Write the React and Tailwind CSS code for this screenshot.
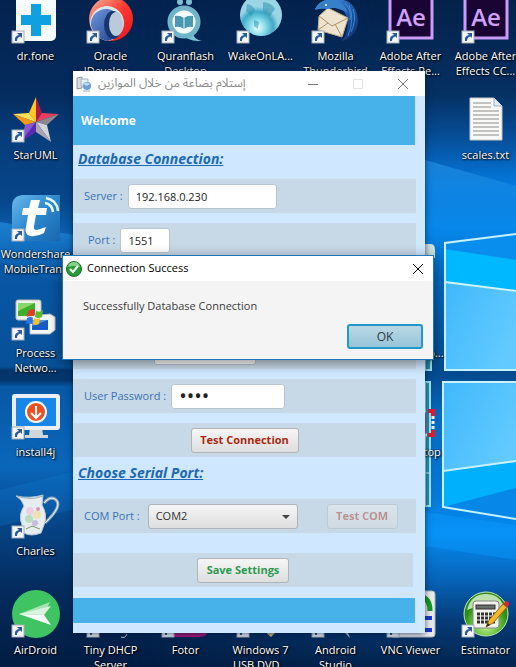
import React from "react";

const FONT = "font-['Open_Sans','Noto_Sans',sans-serif]";

function Wallpaper() {
  return (
    <svg className="absolute inset-0 h-full w-full" viewBox="0 0 516 667" preserveAspectRatio="none" aria-hidden="true">
      <defs>
        <linearGradient id="left" x1="0" y1="0" x2="0" y2="1">
          <stop offset="0" stopColor="#04224f" />
          <stop offset="0.14" stopColor="#042c5e" />
          <stop offset="0.2" stopColor="#063c7a" />
          <stop offset="0.3" stopColor="#06468a" />
          <stop offset="0.35" stopColor="#0b5fae" />
          <stop offset="0.42" stopColor="#0856a4" />
          <stop offset="0.55" stopColor="#075098" />
          <stop offset="0.555" stopColor="#04366c" />
          <stop offset="0.57" stopColor="#04366c" />
          <stop offset="0.58" stopColor="#0858a6" />
          <stop offset="0.7" stopColor="#0a66ba" />
          <stop offset="0.78" stopColor="#06468a" />
          <stop offset="0.88" stopColor="#042c5e" />
          <stop offset="1" stopColor="#021c42" />
        </linearGradient>
        <linearGradient id="right" x1="0" y1="0" x2="0" y2="1">
          <stop offset="0" stopColor="#04214a" />
          <stop offset="0.14" stopColor="#053062" />
          <stop offset="0.21" stopColor="#06509c" />
          <stop offset="0.28" stopColor="#047be0" />
          <stop offset="0.34" stopColor="#0489ee" />
          <stop offset="0.42" stopColor="#0568be" />
          <stop offset="0.56" stopColor="#044a8e" />
          <stop offset="0.62" stopColor="#0568be" />
          <stop offset="0.74" stopColor="#0578d6" />
          <stop offset="0.8" stopColor="#068cf2" />
          <stop offset="0.87" stopColor="#0763b8" />
          <stop offset="0.93" stopColor="#053c78" />
          <stop offset="1" stopColor="#03244e" />
        </linearGradient>
        <linearGradient id="fade" x1="0" y1="0" x2="1" y2="0">
          <stop offset="0.25" stopColor="#fff" stopOpacity="0" />
          <stop offset="0.85" stopColor="#fff" />
        </linearGradient>
        <mask id="rightMask"><rect width="516" height="667" fill="url(#fade)" /></mask>
        <linearGradient id="pane" x1="0" y1="0" x2="1" y2="0.6">
          <stop offset="0" stopColor="#40b8fb" />
          <stop offset="1" stopColor="#62caff" />
        </linearGradient>
        <linearGradient id="ray" x1="0" y1="0" x2="0" y2="1">
          <stop offset="0" stopColor="#2a9cf0" stopOpacity="0.55" />
          <stop offset="1" stopColor="#1178cc" stopOpacity="0" />
        </linearGradient>
      </defs>
      <rect width="516" height="667" fill="url(#left)" />
      <rect width="516" height="667" fill="url(#right)" mask="url(#rightMask)" />
      <path d="M0 222 L80 236 L80 290 L0 262Z" fill="url(#ray)" />
      <path d="M0 526 L80 508 L80 470 L0 490Z" fill="#1180d8" opacity="0.25" />
      <path d="M425 160 L516 186 V236 L445 243 V255 H425Z" fill="url(#ray)" />
      <path d="M425 546 L516 560 L516 525 L425 512Z" fill="#0a9bff" opacity="0.4" />
      <path d="M445 244 L516 234 V370 H445Z" fill="#00b8ff" />
      <path d="M445 244 L516 234 V260 L445 249Z" fill="#0a8eee" />
      <path d="M445 282 L516 292 V370 H445Z" fill="url(#pane)" />
      <path d="M445 282 L516 291" stroke="#d0f4ff" strokeWidth="2" />
      <path d="M516 234 L445 243 V370 H516" fill="none" stroke="#c4f2ff" strokeWidth="2" />
      <path d="M443 382 H516 V519 L443 508Z" fill="#00b0fc" />
      <path d="M443 382 H516 V462 L443 471Z" fill="url(#pane)" />
      <path d="M443 507 L516 488 V519Z" fill="#0787e8" />
      <path d="M443 471 L516 461" stroke="#c4f2ff" strokeWidth="2" />
      <path d="M516 382 H443 V507 L516 519" fill="none" stroke="#c4f2ff" strokeWidth="2" />
      <path d="M425 252 H431 V370 H425Z M425 382 H430 V506 H425Z" fill="#2690a8" stroke="#9be4f0" strokeWidth="2" />
      <path d="M425 473 H430" stroke="#c4f2ff" />
    </svg>
  );
}

const art = {
  drfone: (
    <>
      <rect x="4" y="0" width="40" height="45" rx="5" fill="#f8fbfd" />
      <path d="M19 8h10v11h10v10H29v11H19V29H9V19h10z" fill="#0fa0e2" />
    </>
  ),
  oracle: (
    <>
      <defs>
        <linearGradient id="orR" x1="0" y1="0" x2="1" y2="1"><stop offset="0" stopColor="#f8b8a0" /><stop offset=".5" stopColor="#fb3a30" /><stop offset="1" stopColor="#e8141c" /></linearGradient>
        <linearGradient id="orB" x1="0" y1="0" x2="1" y2="1"><stop offset="0" stopColor="#6c9ae0" /><stop offset="1" stopColor="#1c3c88" /></linearGradient>
      </defs>
      <circle cx="24" cy="23" r="22" fill="url(#orR)" />
      <path d="M3 28A17 17 0 1 1 33 38Q28 44 20 45Q6 42 3 28Z" fill="#dfe4ea" />
      <path d="M4 30A15 15 0 1 1 33 33Q30 43 20 45Q7 42 4 30Z" fill="url(#orB)" />
      <ellipse cx="26" cy="29" rx="9" ry="14" fill="#173670" />
      <ellipse cx="29" cy="28" rx="7" ry="12" fill="#bcc9da" />
    </>
  ),
  quran: (
    <>
      <circle cx="18" cy="6" r="3" fill="#7cc0d2" /><circle cx="27" cy="6" r="3" fill="#7cc0d2" />
      <path d="M22 40c6 5 12 5 18 5-5-1-8-3-9-8z" fill="#7cc0d2" />
      <circle cx="22" cy="26" r="14" fill="#f2fafc" stroke="#6fb5c9" strokeWidth="5" />
      <path d="M13 20q5-1 9 2 4-3 9-2v11q-5-1-9 2-4-3-9-2z" fill="#4b98b2" /><path d="M22 22v11" stroke="#e4f4f8" />
    </>
  ),
  globe: (
    <>
      <defs><radialGradient id="gl" cx=".42" cy=".8"><stop offset="0" stopColor="#f2ffff" /><stop offset=".35" stopColor="#8fe0ec" /><stop offset=".75" stopColor="#3fa9c8" /><stop offset="1" stopColor="#9bd4e4" /></radialGradient></defs>
      <circle cx="24" cy="19" r="21" fill="url(#gl)" />
      <path d="M10 8q6 1 8 6l-4 6-5-5zM26 6q9 1 12 7l-5 7-7-4zM17 24l5 2-1 7-4-3z" fill="#258cab" opacity=".5" />
    </>
  ),
  bird: (
    <>
      <defs><linearGradient id="tb" x1="0" y1="0" x2="1" y2="1"><stop offset="0" stopColor="#5ba8e6" /><stop offset=".5" stopColor="#1e5cad" /><stop offset="1" stopColor="#0c2c6b" /></linearGradient></defs>
      <path d="M3 13Q9 2 24 3Q44 3 46 24Q46 40 30 45Q40 32 32 15L16 9Z" fill="url(#tb)" />
      <path d="M7 20L16 12L36 22L30 41L6 34Z" fill="#eee3cd" stroke="#bfae8d" />
      <path d="M7 20L20 30L36 22M6 34L16 27M30 41L23 28" fill="none" stroke="#a99270" />
      <path d="M3 14Q8 2 20 4Q32 5 36 17Q24 10 16 13Q9 12 3 14Z" fill="#387fc9" />
      <circle cx="14" cy="9" r="1" fill="#fff" />
      <path d="M37 9Q43 22 36 40M41 13Q45 24 39 36M33 7Q40 15 38 24" fill="none" stroke="#4a94de" opacity=".8" />
    </>
  ),
  ae: (
    <>
      <rect x="3" y="1" width="42" height="41" fill="#1a0433" stroke="#c99cf5" strokeWidth="3" />
      <text x="24" y="30" textAnchor="middle" fontSize="24" fontWeight="600" fill="#cfa2fa">Ae</text>
    </>
  ),
  star: (
    <>
      <path d="M24 2L17 18L24 27Z" fill="#ffc81f" /><path d="M24 2L30 18L24 27Z" fill="#b4184a" />
      <path d="M30 18L47 19L24 27Z" fill="#e8405c" /><path d="M47 19L35 30L24 27Z" fill="#8a8a8e" />
      <path d="M35 30L39 47L24 27Z" fill="#d4d4d8" /><path d="M39 47L24 37V27Z" fill="#aaa5b2" />
      <path d="M24 37L9 47L24 27Z" fill="#5a2bae" /><path d="M9 47L13 30L24 27Z" fill="#8b55d8" />
      <path d="M13 30L1 19L24 27Z" fill="#f29a12" /><path d="M1 19L17 18L24 27Z" fill="#ffe05a" />
    </>
  ),
  text: (
    <>
      <path d="M8 3H32L40 11V45H8Z" fill="#f9f9f7" stroke="#c6c6c2" />
      <path d="M32 3V11H40" fill="#dcebf5" stroke="#9fb4c2" />
      <path d="M11 8H29M11 12H29M11 16H37M11 20H37M11 24H37M11 28H37M11 32H37M11 36H37M11 40H37" stroke="#8c8c8c" />
    </>
  ),
  wonder: (
    <>
      <defs><linearGradient id="wo" x1="0" y1="0" x2="1" y2="1"><stop offset="0" stopColor="#6db9ec" /><stop offset=".5" stopColor="#2b88cc" /><stop offset="1" stopColor="#1a66ad" /></linearGradient></defs>
      <path d="M12 1H48V47H0V13Q0 1 12 1Z" fill="url(#wo)" />
      <path d="M19 6H28L26 14H35L34 21H24L22 32Q21 36 25 36L34 33L32 39Q25 43 18 42Q12 40 14 33L16 21H10L11 14H17Z" fill="#fff" />
      <path d="M33 9Q40 10 41 18M34 4Q45 6 46 17" fill="none" stroke="#e8f6ff" strokeWidth="2.500" />
    </>
  ),
  process: (
    <>
      <rect x="4" y="7" width="25" height="20" rx="2" fill="#eef0ec" stroke="#b8bcb8" /><rect x="6" y="10" width="17" height="13" fill="#3fae2a" /><path d="M6 10H23L6 18Z" fill="#8ad86a" />
      <path d="M18 23L38 21L43 24V37L38 41H18Z" fill="#f4f5f6" stroke="#b4b8c0" /><path d="M20 27H36V37H20Z" fill="#175bc4" /><path d="M20 27H36L20 33Z" fill="#4a9aec" />
      <path d="M16 18q4-3 7-1l-1 6q-4-1-7 1z" fill="#e5392a" /><path d="M24 18q4 2 7-1l-1 7q-4 2-7 0z" fill="#5cb82e" /><path d="M15 25q4-2 6 0l-1 6q-3-1-6 0z" fill="#2f76e0" /><path d="M22 25q4 2 6 0l-1 6q-4 2-6 0z" fill="#f8bd24" />
    </>
  ),
  install: (
    <>
      <path d="M18 36H30L31 43H36V46H13V43H17Z" fill="#d0d6dc" />
      <rect x="0" y="2" width="48" height="36" rx="3" fill="#eceff2" /><rect x="4" y="6" width="40" height="28" fill="#1686e8" />
      <circle cx="24" cy="20" r="10" fill="#ec4f20" stroke="#fff" strokeWidth="2" />
      <path d="M24 14V25M19 21L24 26L29 21" fill="none" stroke="#fff" strokeWidth="2" />
    </>
  ),
  jug: (
    <>
      <path d="M32 12Q38 5 43 8Q52 14 33 32" fill="none" stroke="#8fa9bc" strokeWidth="3" /><path d="M32 12Q38 5 43 8Q52 14 33 32" fill="none" stroke="#eef5f8" />
      <path d="M4 5Q18 8 31 4L30 14Q36 24 32 34L29 42Q19 46 12 42L10 34Q6 24 12 15Q10 8 4 5Z" fill="#e6edf0" stroke="#b8c8d0" />
      <path d="M5 5Q18 10 31 5" fill="none" stroke="#9bb0bc" />
      <circle cx="18" cy="20" r="4" fill="#ecd0e0" /><circle cx="25" cy="24" r="4" fill="#f0e2b0" /><circle cx="17" cy="28" r="4" fill="#b9dcc3" /><circle cx="26" cy="18" r="2" fill="#dc96b4" /><circle cx="23" cy="32" r="3" fill="#c8bce0" /><path d="M14 38L20 35L28 38" stroke="#7a9a70" fill="none" />
    </>
  ),
  airdroid: (
    <>
      <circle cx="24" cy="24" r="24" fill="#40c463" />
      <path d="M7 24L38 12L32 24Z" fill="#a4e2b2" /><path d="M7 24L39 16L32 25Z" fill="#d9f4df" /><path d="M7 24L32 25L39 35Z" fill="#fff" />
    </>
  ),
  estimator: (
    <>
      <defs><radialGradient id="es" cx=".5" cy=".75"><stop offset="0" stopColor="#c9f59a" /><stop offset=".7" stopColor="#56b830" /><stop offset="1" stopColor="#2e8a1c" /></radialGradient></defs>
      <circle cx="24" cy="24" r="22" fill="url(#es)" stroke="#c7e8b8" />
      <path d="M5 20Q9 4 24 4Q39 4 43 20Q24 12 5 20Z" fill="#e0f6d0" opacity=".8" />
      <rect x="11" y="11" width="26" height="27" rx="3" fill="#f2f3ef" stroke="#888" /><rect x="14" y="15" width="19" height="4" fill="#676d68" stroke="#333" />
      <path d="M15 24H33M15 28H33M15 32H33" stroke="#333" strokeWidth="3" strokeDasharray="3 1" />
      <path d="M24 37L27 30L41 14L45 17L31 33Z" fill="#f5b62a" stroke="#a36510" /><path d="M41 14L44 11Q48 12 47 15L45 17Z" fill="#dc2430" /><path d="M24 37L26 33L28 35Z" fill="#222" />
    </>
  ),
  vnc: (
    <>
      <rect x="2" y="1" width="46" height="46" rx="3" fill="#e9eaea" stroke="#aeb4b8" />
      <path d="M26 22V14Q28 7 35 7Q43 9 43 21" fill="none" stroke="#139a1c" strokeWidth="5" />
      <path d="M8 28H45M8 40H45" stroke="#1738d4" strokeWidth="4" />
    </>
  ),
  dhcp: <path d="M34 47Q38 49 40 44" fill="none" stroke="#b9c8d8" />,
  fotor: <path d="M12 40H46Q46 47 38 47H12Z" fill="#a81678" />,
  usb: <path d="M26 40L34 47L38 43Z" fill="#d2b98c" />,
  studio: <path d="M30 40L38 48L35 40Z" fill="#b9c8d8" />,
  paper: <path d="M24 50H44Q48 50 48 56V64H24Z" fill="#cfe2e0" />,
  brackets: (
    <>
      <rect x="20" y="20" width="20" height="22" fill="#6b76ae" />
      <path d="M36 19H46V43H36" fill="none" stroke="#f0f4f8" strokeWidth="3" strokeDasharray="3 2" />
      <path d="M41 19H46V24M41 43H46V38" fill="none" stroke="#dc1c30" strokeWidth="4" />
    </>
  ),
};

function Shortcut({ icon, lines, cell, arrow = true }) {
  return (
    <a href="#" className={`flex flex-col items-center text-center leading-[15px] whitespace-nowrap text-white [text-shadow:1px_1px_2px_#000,0_0_2px_#000] ${cell}`}>
      <svg className="mb-1 h-12 w-12 shrink-0 overflow-visible [text-shadow:none]" viewBox="0 0 48 48" aria-hidden="true">
        {art[icon]}
        {arrow && (
          <g>
            <rect x="0" y="35" width="12" height="12" fill="#f4f6f8" stroke="#a4aeb8" />
            <path d="M3 45Q2 40 7 39L5 37H10V42L8.500 40.500Q5 41 5 45Z" fill="#2a5a9c" />
          </g>
        )}
      </svg>
      {lines.map((l) => <span key={l}>{l}</span>)}
    </a>
  );
}

const shortcuts = [
  ["drfone", ["dr.fone"], "col-start-1 row-start-1"],
  ["oracle", ["Oracle", "JDevelop..."], "col-start-2 row-start-1"],
  ["quran", ["Quranflash", "Desktop"], "col-start-3 row-start-1"],
  ["globe", ["WakeOnLA..."], "col-start-4 row-start-1"],
  ["bird", ["Mozilla", "Thunderbird"], "col-start-5 row-start-1"],
  ["ae", ["Adobe After", "Effects Re..."], "col-start-6 row-start-1"],
  ["ae", ["Adobe After", "Effects CC..."], "col-start-7 row-start-1"],
  ["star", ["StarUML"], "col-start-1 row-start-2"],
  ["text", ["scales.txt"], "col-start-7 row-start-2", false],
  ["wonder", ["Wondershare", "MobileTrans"], "col-start-1 row-start-3"],
  ["paper", [], "col-start-6 row-start-3", false],
  ["process", ["Process", "Netwo..."], "col-start-1 row-start-4"],
  ["process", ["Screen Cap..."], "col-start-6 row-start-4", false],
  ["install", ["install4j"], "col-start-1 row-start-5"],
  ["brackets", ["My Desktop"], "col-start-6 row-start-5", false],
  ["jug", ["Charles"], "col-start-1 row-start-6"],
  ["airdroid", ["AirDroid"], "col-start-1 row-start-7"],
  ["dhcp", ["Tiny DHCP", "Server"], "col-start-2 row-start-7"],
  ["fotor", ["Fotor"], "col-start-3 row-start-7"],
  ["usb", ["Windows 7", "USB DVD..."], "col-start-4 row-start-7"],
  ["studio", ["Android", "Studio"], "col-start-5 row-start-7"],
  ["vnc", ["VNC Viewer"], "col-start-6 row-start-7"],
  ["estimator", ["Estimator"], "col-start-7 row-start-7"],
];

function Caption({ label, path, tone }) {
  return (
    <button type="button" aria-label={label} className={`flex h-full w-[45px] items-center justify-center ${tone}`}>
      <svg className="h-3 w-3" viewBox="0 0 12 12" fill="none" stroke="currentColor" aria-hidden="true"><path d={path} /></svg>
    </button>
  );
}

function Row({ className = "", children }) {
  return <div className={`flex h-[34px] items-center bg-[#c7d8e7] ${className}`}>{children}</div>;
}

function Field({ id, label, type = "text", value, indent = "pl-[11px]", size = "w-[100px]" }) {
  return (
    <>
      <label htmlFor={id} className={`mr-[5px] text-[#3a74b4] ${indent}`}>{label}</label>
      <input id={id} type={type} defaultValue={value} className={`h-[25px] rounded-[3px] border border-[#b9c6d2] bg-white px-[7px] text-[#222] outline-none ${size}`} />
    </>
  );
}

const buttonBase = "h-[25px] rounded-[3px] border border-[#b0b4b8] bg-linear-to-b from-[#f6f6f6] to-[#dedede] font-bold whitespace-nowrap";
const headingBase = "pl-[5px] text-sm leading-5 font-bold text-[#2068b0] italic underline";

function SettingsWindow() {
  return (
    <section className="absolute top-[71px] left-[73px] w-[352px] bg-[#cfe8ff] pb-[10px] shadow-[0_1px_6px_rgba(0,20,60,0.7)]">
      <header className="flex h-[25px] items-center bg-white">
        <svg className="ml-[3px] h-4 w-4" viewBox="0 0 16 16" aria-hidden="true">
          <path d="M1 2L6 1V12L1 13Z" fill="#d8dcde" stroke="#8f9699" /><path d="M5 3H12V10H5Z" fill="#e6ecf0" stroke="#a8b4bc" />
          <circle cx="11" cy="10" r="4" fill="#6a9cd8" /><path d="M7 8Q11 5 14 8L11 10Z" fill="#b8d8f4" /><path d="M7 15H14" stroke="#a0b0c0" />
        </svg>
        <h1 dir="rtl" className="ml-[6px] font-['Noto_Sans_Arabic','DejaVu_Sans',sans-serif] text-xs whitespace-nowrap text-[#8a8a8a]">إستلام بضاعة من خلال الموازين</h1>
        <div className="ml-auto flex h-full">
          <Caption label="Minimize" path="M1 6.500H11" tone="text-[#777]" />
          <Caption label="Maximize" path="M1.500 1.500H10.500V10.500H1.500Z" tone="text-[#e2e2e2]" />
          <Caption label="Close" path="M1 1L11 11M11 1L1 11" tone="text-[#777]" />
        </div>
      </header>
      <div className="mr-[10px] flex h-[49px] items-center bg-[#47b1ea] pl-2 text-xs font-bold text-white">Welcome</div>
      <h2 className={`mt-1 mb-[10px] ${headingBase}`}>Database Connection:</h2>
      <div className="mr-[9px] flex flex-col gap-[10px]">
        <Row><Field id="server" label="Server :" value="192.168.0.230" size="w-[149px]" /></Row>
        <Row><Field id="port" label="Port :" value="1551" indent="pl-[15px]" size="w-[50px]" /></Row>
        <Row className="my-3"><Field id="sid" label="SID :" value="" /></Row>
        <Row><Field id="user" label="User Name :" value="" indent="pl-[13px]" size="w-[102px]" /></Row>
        <Row><Field id="password" label="User Password :" type="password" value="1234" size="w-[114px] text-xl" /></Row>
        <Row className="justify-center"><button type="button" className={`w-[108px] text-[#a82a10] ${buttonBase}`}>Test Connection</button></Row>
      </div>
      <h2 className={`mt-[6px] mb-4 ${headingBase}`}>Choose Serial Port:</h2>
      <Row className="mr-[9px]">
        <label htmlFor="com" className="mr-2 pl-[11px] text-[#3a74b4]">COM Port :</label>
        <div className="relative">
          <select id="com" defaultValue="COM2" className="block h-[25px] w-[150px] appearance-none rounded-[3px] border border-[#b0b4b8] bg-linear-to-b from-[#f6f6f6] to-[#dedede] px-[7px] text-[#333]">
            <option>COM1</option>
            <option>COM2</option>
          </select>
          <svg className="pointer-events-none absolute top-[11px] right-2 h-1 w-2" viewBox="0 0 8 4" aria-hidden="true"><path d="M0 0H8L4 4Z" fill="#444" /></svg>
        </div>
        <button type="button" disabled className={`ml-[29px] w-[71px] text-[#a82a10] opacity-40 ${buttonBase}`}>Test COM</button>
      </Row>
      <Row className="mt-5 mr-3 justify-center"><button type="button" className={`w-[92px] text-[#2c9a50] ${buttonBase}`}>Save Settings</button></Row>
      <footer className="mt-[11px] mr-[10px] h-[25px] bg-[#47b1ea]" />
    </section>
  );
}

function SuccessDialog() {
  return (
    <section role="dialog" aria-labelledby="dialog-title" className="absolute top-[255px] left-[62px] w-[372px] border border-[#1f78bc] bg-[#f4f4f4] shadow-[0_3px_12px_rgba(0,0,0,0.45)]">
      <header className="flex h-[25px] items-center bg-white text-black">
        <svg className="ml-[3px] h-4 w-4" viewBox="0 0 16 16" aria-hidden="true">
          <circle cx="8" cy="8" r="7.500" fill="#279b35" stroke="#16702a" /><path d="M2 6Q3 1 8 1Q13 1 14 6Q8 4 2 6Z" fill="#83cf86" />
          <path d="M4 8L7 11L12 5" fill="none" stroke="#fff" strokeWidth="2" />
        </svg>
        <h2 id="dialog-title" className="ml-[5px]">Connection Success</h2>
        <button type="button" aria-label="Close" className="mr-[9px] ml-auto">
          <svg className="h-3 w-3" viewBox="0 0 12 12" stroke="#000" aria-hidden="true"><path d="M1 1L11 11M11 1L1 11" /></svg>
        </button>
      </header>
      <p className="mt-4 ml-5 leading-[18px] text-[#3c3c3c]">Successfully Database Connection</p>
      <div className="mt-[9px] mr-[10px] mb-[10px] flex justify-end">
        <button type="button" className="h-[25px] w-[76px] rounded-[3px] border-2 border-[#229ac8] bg-linear-to-b from-[#b8d8e6] to-[#98c4d8] text-xs text-[#2b3b44]">OK</button>
      </div>
    </section>
  );
}

export default function App() {
  return (
    <main className={`relative h-screen overflow-hidden bg-[#04224f] text-[11px] ${FONT}`}>
      <Wallpaper />
      <nav aria-label="Desktop" className="relative -mt-1 -ml-0.5 grid auto-rows-[99px] grid-cols-[repeat(7,75px)]">
        {shortcuts.map(([icon, lines, cell, arrow]) => <Shortcut key={cell} icon={icon} lines={lines} cell={cell} arrow={arrow} />)}
      </nav>
      <SettingsWindow />
      <SuccessDialog />
    </main>
  );
}
